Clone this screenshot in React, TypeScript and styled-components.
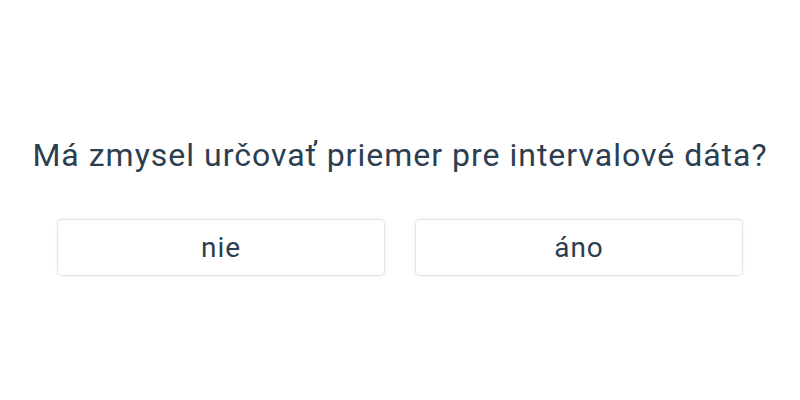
import styled, { createGlobalStyle } from 'styled-components';

const GlobalStyle = createGlobalStyle`
	html, body {
		margin: 0;
		padding: 0;
		background: #ffffff;
	}
	body {
		font-family: Roboto, 'Noto Sans', Arial, sans-serif;
		color: #2c3e50;
	}
`;

const answers = ['nie', 'áno'];

const App = () => {
	return (
		<>
			<GlobalStyle />
			<Page>
				<Question>Má zmysel určovať priemer pre intervalové dáta?</Question>
				<Answers>
					{answers.map((a) => (
						<AnswerButton key={a}>{a}</AnswerButton>
					))}
				</Answers>
			</Page>
		</>
	);
};

export default App;

const Page = styled.div`
	height: 400px;
	display: flex;
	flex-direction: column;
	align-items: center;
	justify-content: center;
	padding-top: 10px;
	box-sizing: border-box;
`;

const Question = styled.h1`
	margin: 0 0 44px;
	font-size: 32px;
	font-weight: 400;
	letter-spacing: 1px;
	line-height: 40px;
	text-align: center;
`;

const Answers = styled.div`
	display: grid;
	grid-template-columns: 328px 328px;
	gap: 30px;
`;

const AnswerButton = styled.button`
	height: 57px;
	border: 1px solid #e6e6e6;
	border-radius: 5px;
	background: #ffffff;
	box-shadow: 0 0 3px rgba(0, 0, 0, 0.1);
	font-family: Roboto, 'Noto Sans', Arial, sans-serif;
	font-size: 28px;
	letter-spacing: 1px;
	color: #2c3e50;
	cursor: pointer;
`;
